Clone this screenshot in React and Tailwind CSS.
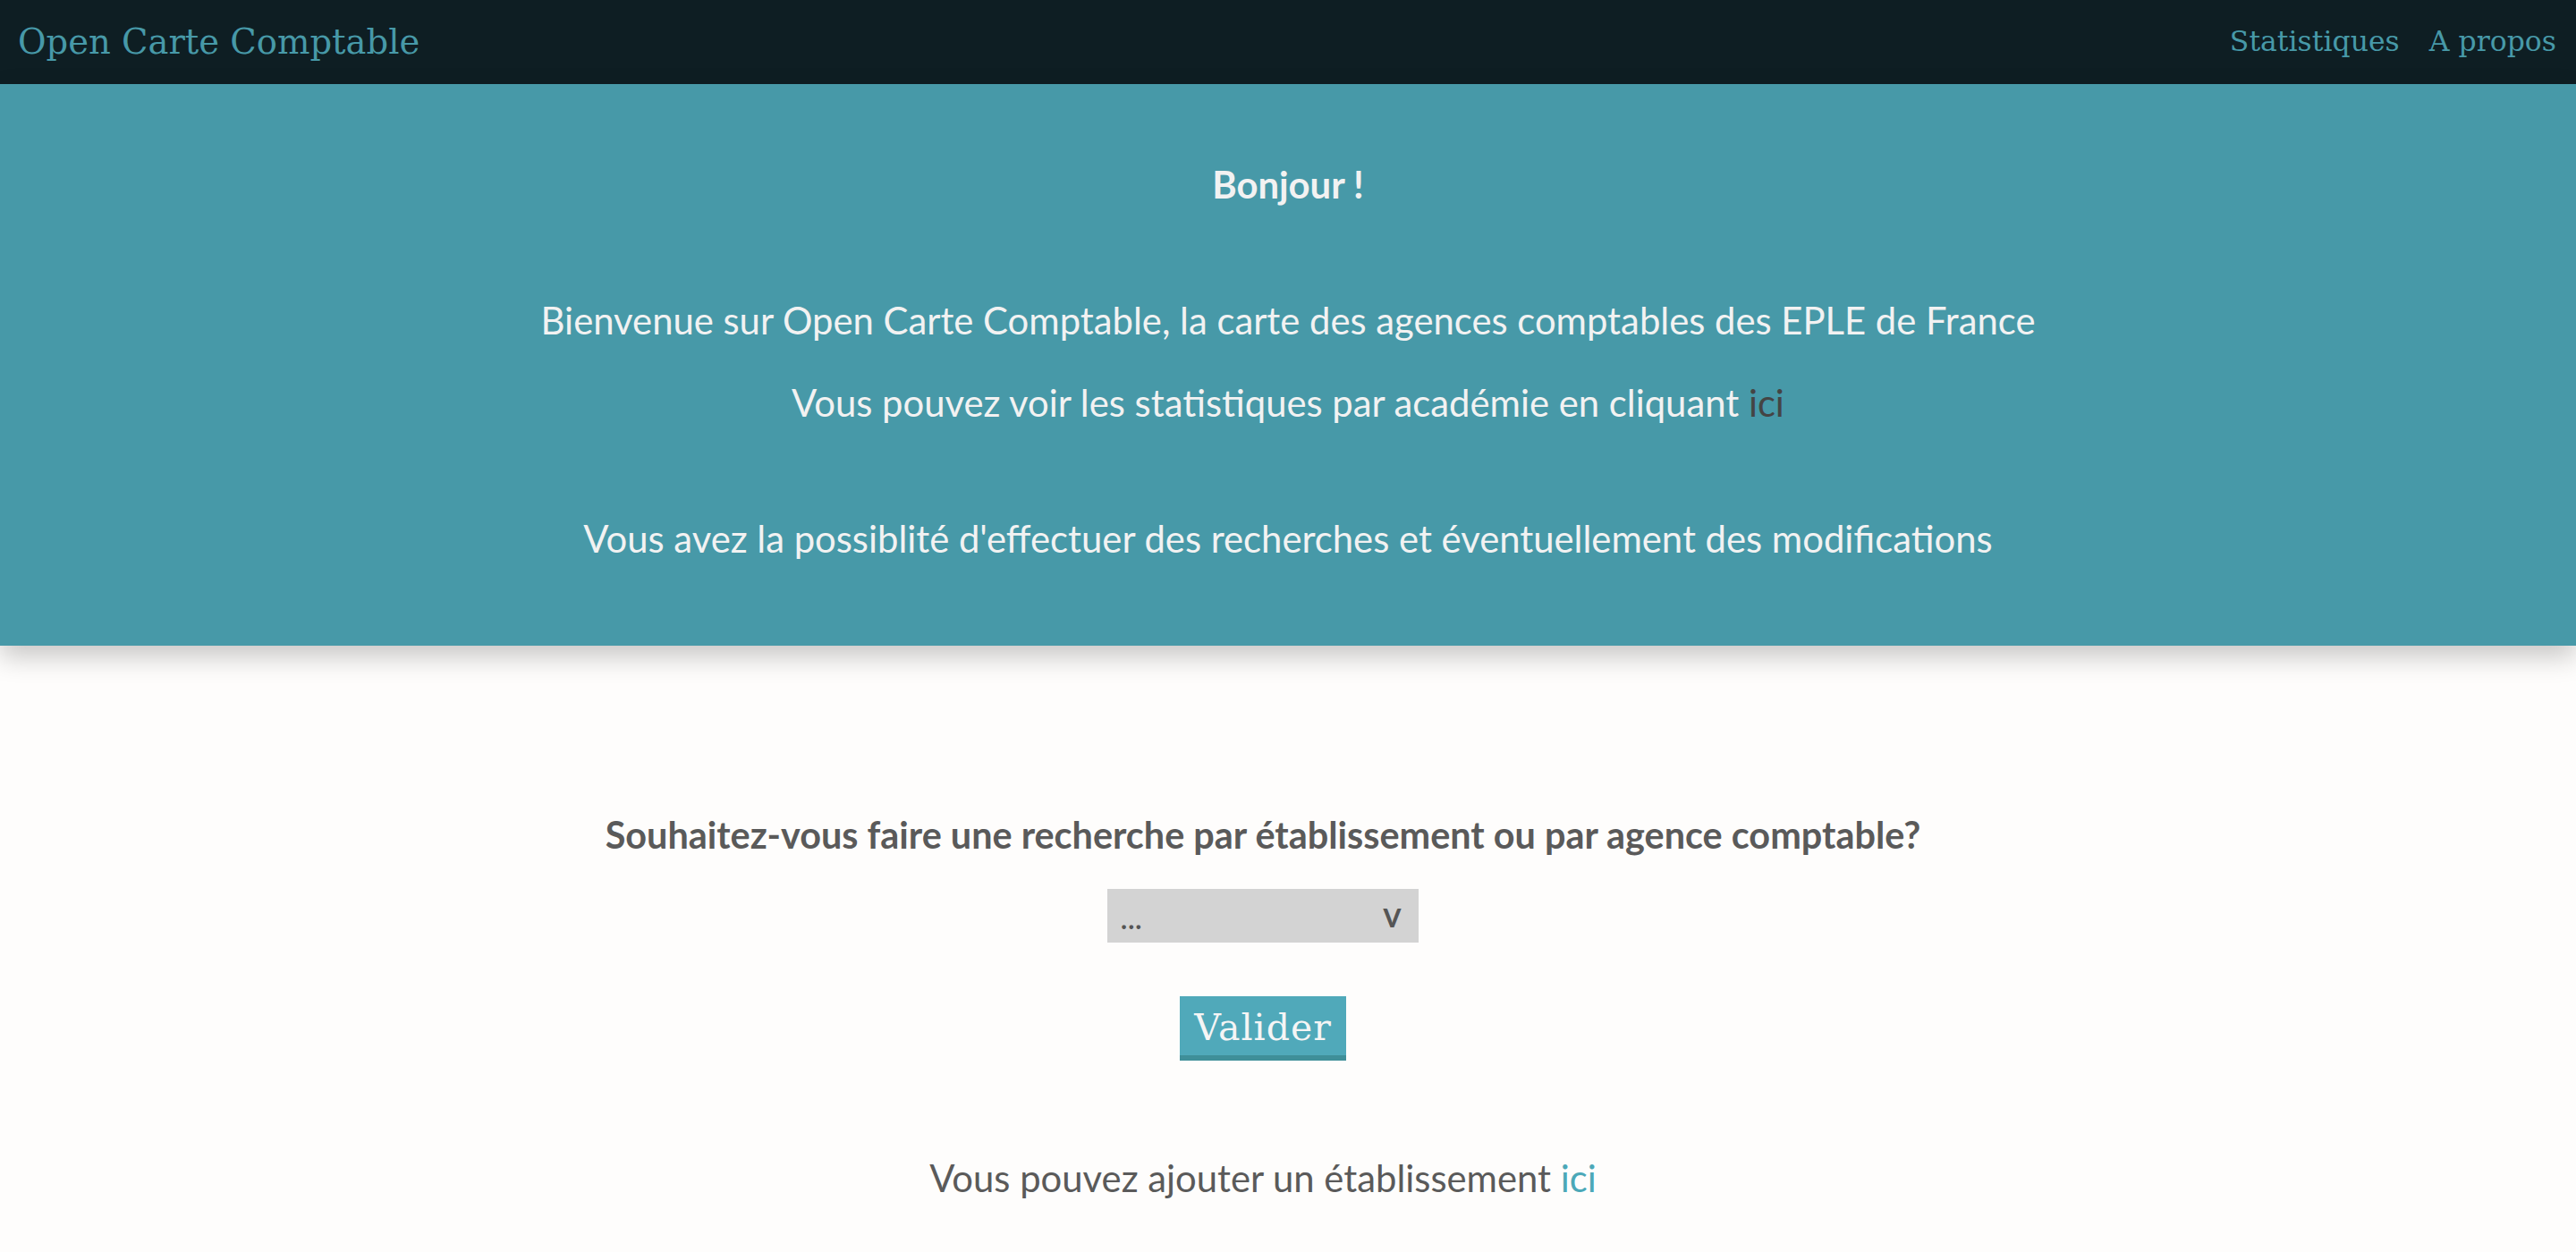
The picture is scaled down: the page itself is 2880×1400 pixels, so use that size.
export default function App() {
  return (
    <div className="min-h-screen bg-[#fefdfc] font-['Lato',sans-serif] text-[#5a5a5a]">
      <header className="h-[94px] bg-[#0e1e23] flex items-center justify-between pl-[20px] pr-[22px] font-['DejaVu_Serif',serif] text-[#4799a8]">
        <a href="#" className="text-[38.5px] leading-none">Open Carte Comptable</a>
        <nav className="flex gap-[33px] text-[31.5px] leading-none">
          <a href="#">Statistiques</a>
          <a href="#">A propos</a>
        </nav>
      </header>

      <section className="relative bg-[#4799a8] text-[#f2f2f2] text-center text-[41.8px] leading-[50px] pt-[87px] pb-[95px] shadow-[0_12px_28px_rgba(0,0,0,0.22)]">
        <h2 className="font-bold">Bonjour !</h2>
        <p className="mt-[102px]">
          Bienvenue sur Open Carte Comptable, la carte des agences comptables des EPLE de France
        </p>
        <p className="mt-[42px]">
          Vous pouvez voir les statistiques par académie en cliquant{' '}
          <a href="#" className="text-[#444]">ici</a>
        </p>
        <p className="mt-[102px]">
          Vous avez la possiblité d'effectuer des recherches et éventuellement des modifications
        </p>
      </section>

      <main className="flex flex-col items-center pt-[186px] pb-[60px] pr-[56px]">
        <h3 className="text-[41.4px] leading-[50px] font-bold">
          Souhaitez-vous faire une recherche par établissement ou par agence comptable?
        </h3>
        <div className="mt-[36px] w-[348px] h-[60px] bg-[#d3d3d3] flex items-end justify-between pl-[15px] pr-[19px] pb-[12px] text-[40px] leading-none text-[#555]">
          <span className="font-bold text-[30px] leading-none tracking-[1px]">...</span>
          <span className="font-semibold">v</span>
        </div>
        <button className="mt-[60px] w-[186px] h-[72px] bg-[#50a9ba] border-b-[6px] border-[#3f8f99] text-[#f5f5f5] font-['DejaVu_Serif',serif] text-[41px] leading-none tracking-[1px] pt-[4px]">
          Valider
        </button>
        <p className="mt-[106px] text-[41.8px] leading-[50px]">
          Vous pouvez ajouter un établissement <a href="#" className="text-[#4ba8b8]">ici</a>
        </p>
      </main>
    </div>
  )
}
